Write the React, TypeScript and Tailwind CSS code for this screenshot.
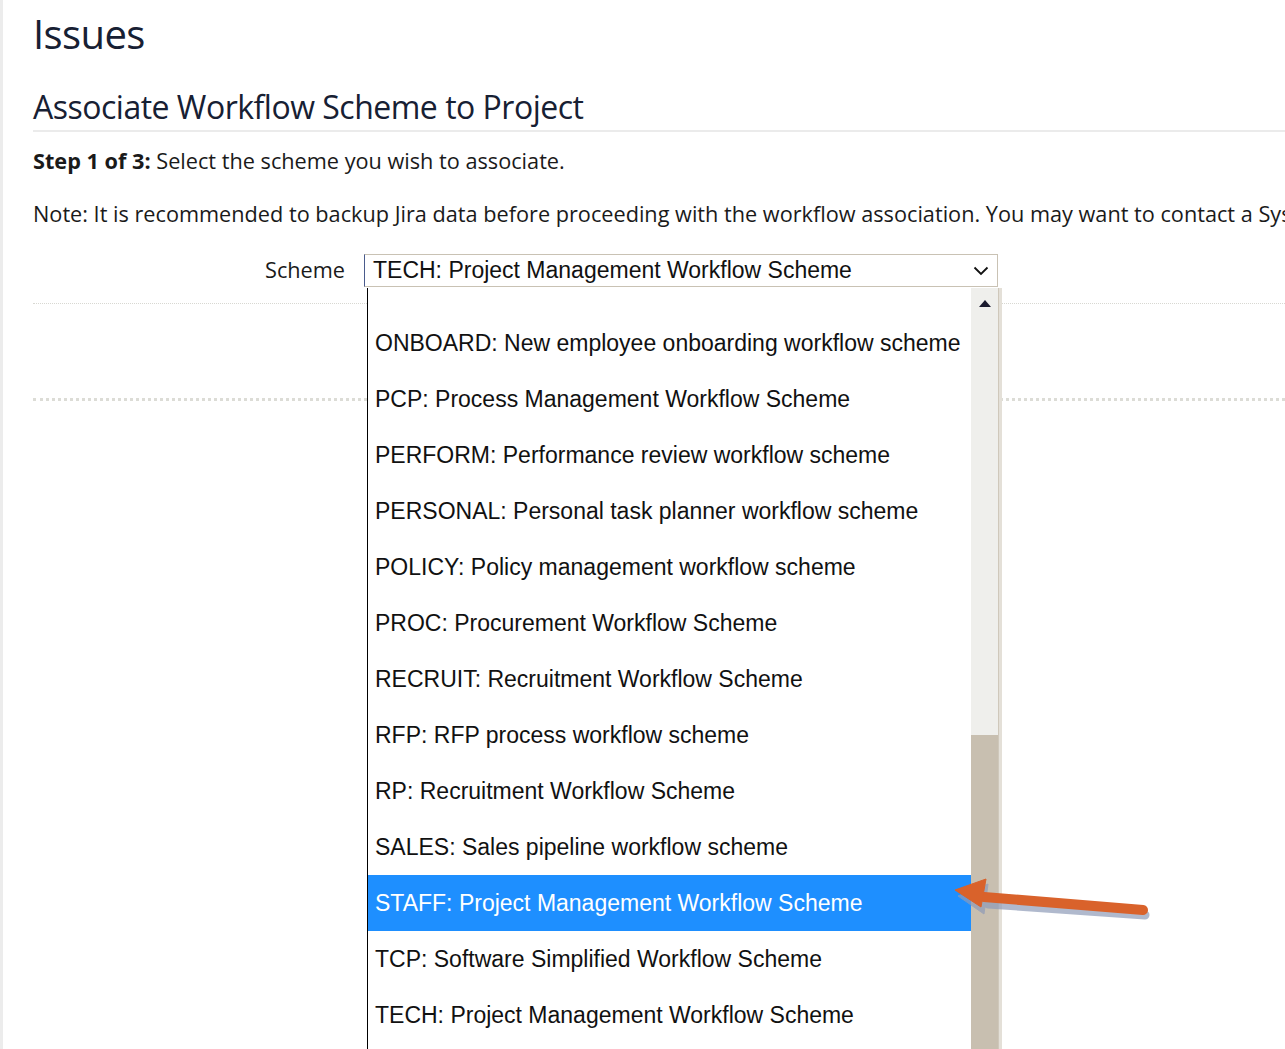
import React from "react";

const options = [
  "ONBOARD: New employee onboarding workflow scheme",
  "PCP: Process Management Workflow Scheme",
  "PERFORM: Performance review workflow scheme",
  "PERSONAL: Personal task planner workflow scheme",
  "POLICY: Policy management workflow scheme",
  "PROC: Procurement Workflow Scheme",
  "RECRUIT: Recruitment Workflow Scheme",
  "RFP: RFP process workflow scheme",
  "RP: Recruitment Workflow Scheme",
  "SALES: Sales pipeline workflow scheme",
  "STAFF: Project Management Workflow Scheme",
  "TCP: Software Simplified Workflow Scheme",
  "TECH: Project Management Workflow Scheme",
];

const selected = "STAFF: Project Management Workflow Scheme";

function Arrow() {
  return (
    <svg
      className="pointer-events-none absolute left-[940px] top-[870px]"
      width="220"
      height="60"
      viewBox="940 870 220 60"
    >
      {/* shadow */}
      <g fill="#8f9bb8" stroke="#8f9bb8" opacity="0.7">
        <path d="M1145 915 L988 904" strokeWidth="9" strokeLinecap="round" fill="none" />
        <path d="M958 896 L988 884 L984 914 Z" strokeWidth="1" />
      </g>
      <g fill="#d9622b" stroke="#d9622b">
        <path d="M1143 910 L984 897" strokeWidth="10" strokeLinecap="round" fill="none" />
        <path d="M955 890 L986 879 L981 907 Z" strokeWidth="1" strokeLinejoin="round" />
      </g>
    </svg>
  );
}

function Dropdown() {
  return (
    <div className="absolute left-[367px] top-[288px] h-[770px] w-[632px] border-l border-black bg-white shadow-[3px_0_0_#e4e0d8]">
      <div className="flex h-full">
        <div className="flex-1 pt-[27px]" style={{ fontFamily: '"Liberation Sans", Arial, sans-serif' }}>
          {options.map((o) => (
            <div
              key={o}
              className={
                "flex h-[56px] items-center whitespace-nowrap pl-[7px] text-[23px] " +
                (o === selected ? "bg-[#1e8fff] text-white" : "text-[#111]")
              }
            >
              {o}
            </div>
          ))}
        </div>
        <div className="flex w-[28px] flex-col border-r border-[#cfc8bb] bg-[#efefec]">
          <div className="flex h-[30px] items-center justify-center">
            <div className="h-0 w-0 border-x-[6px] border-b-[7px] border-x-transparent border-b-[#1a1a2e]" />
          </div>
          <div className="h-[417px]" />
          <div className="flex-1 bg-[#c8bfb0]" />
        </div>
      </div>
    </div>
  );
}

export default function App() {
  return (
    <div
      className="relative flex h-[1049px] overflow-hidden bg-white text-[#1a1a1a]"
      style={{ fontFamily: '"Open Sans", "Noto Sans", sans-serif' }}
    >
      <div className="w-[3px] shrink-0 bg-[#ececec]" />
      <div className="min-w-0 flex-1 pl-[30px]">
        <h1 className="pt-[6px] text-[40px] leading-[56px] tracking-[-0.6px] text-[#172033]">Issues</h1>
        <h2 className="mt-[24px] border-b-2 border-[#ebebeb] pb-[2px] text-[32px] leading-[42px] tracking-[-0.5px] text-[#172033]">
          Associate Workflow Scheme to Project
        </h2>
        <p className="mt-[14px] text-[21.7px] leading-[30px]">
          <span className="font-bold">Step 1 of 3:</span> Select the scheme you wish to associate.
        </p>
        <p className="mt-[23px] overflow-hidden whitespace-nowrap text-[21.7px] leading-[30px]">
          Note: It is recommended to backup Jira data before proceeding with the workflow association. You may want to contact a Sys
        </p>
        <div className="mt-[25px] flex items-center border-b border-dotted border-[#d8d8d2] pb-[16px]">
          <label className="w-[331px] pr-[19px] text-right text-[21.7px]">Scheme</label>
          <div
            className="flex h-[33px] w-[634px] items-center justify-between border border-[#c9c2b4] border-l-[#4a5b8c] pl-[8px] pr-[8px] text-[23px] text-[#111]"
            style={{ fontFamily: '"Liberation Sans", Arial, sans-serif' }}
          >
            <span>TECH: Project Management Workflow Scheme</span>
            <svg width="16" height="10" viewBox="0 0 16 10" fill="none" stroke="#111" strokeWidth="1.8">
              <path d="M1.5 1.5 L8 8 L14.5 1.5" />
            </svg>
          </div>
        </div>
        <div className="h-[97px] border-b-[3px] border-dotted border-[#dcdcd6]" />
      </div>
      <Dropdown />
      <Arrow />
    </div>
  );
}
